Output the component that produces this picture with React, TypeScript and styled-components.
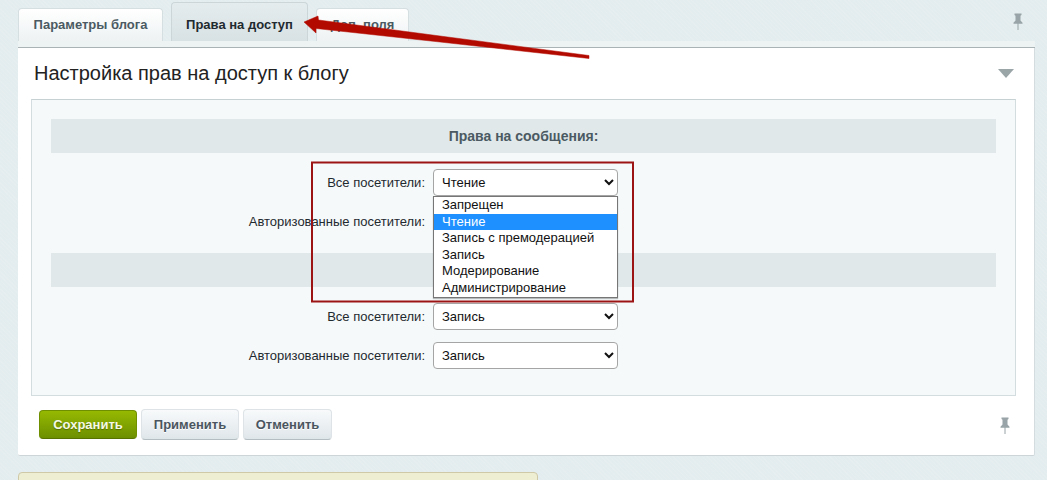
import React from "react";
import styled, { createGlobalStyle } from "styled-components";

const Global = createGlobalStyle`
  html, body { margin: 0; padding: 0; }
  body {
    background-color: #e3ecee;
    background-image: repeating-linear-gradient(45deg, rgba(255,255,255,.10) 0 1px, transparent 1px 3px);
    font-family: "Liberation Sans", Arial, sans-serif;
    overflow: hidden;
  }
`;

const Page = styled.div`
  position: relative;
  width: 1047px;
  height: 480px;
  overflow: hidden;
  padding: 0 12px 0 18px;
  box-sizing: border-box;
`;

const TabBar = styled.div`
  display: flex;
  align-items: flex-end;
  gap: 8px;
  height: 41px;
  position: relative;
`;

const Tab = styled.div<{ $active?: boolean; $width: number }>`
  box-sizing: border-box;
  width: ${(p) => p.$width}px;
  height: ${(p) => (p.$active ? 39 : 33)}px;
  padding: ${(p) => (p.$active ? "14px" : "8px")} 0 0;
  text-align: center;
  font-size: 13px;
  line-height: 15px;
  font-weight: bold;
  color: ${(p) => (p.$active ? "#1f2a30" : "#4b5a62")};
  border: 1px solid ${(p) => (p.$active ? "#ccd6d9" : "#d5dee0")};
  border-bottom: 0;
  border-radius: 4px 4px 0 0;
  background: ${(p) =>
    p.$active
      ? "linear-gradient(to bottom, #e4ecee, #d8e1e3)"
      : "linear-gradient(to bottom, #ffffff, #eef2f3)"};
`;

const TabPin = styled.svg`
  position: absolute;
  right: 12px;
  top: 13px;
`;

const Strip = styled.div`
  height: 6px;
  background: #edf2f3;
  border-bottom: 1px solid #a9b3b6;
`;

const Panel = styled.div`
  box-sizing: border-box;
  width: 1017px;
  height: 408px;
  background: #fff;
  border-bottom: 1px solid #cdd5d8;
  border-right: 1px solid #d5dcdf;
  display: flex;
  flex-direction: column;
  padding: 0 18px 0 13px;
  border-radius: 0 0 2px 2px;
`;

const TitleRow = styled.div`
  height: 51px;
  display: flex;
  align-items: center;
  justify-content: space-between;
  flex: none;
  padding: 0 3px 0 3px;
`;

const Title = styled.h1`
  margin: 0;
  font-size: 20px;
  font-weight: normal;
  color: #222;
`;

const Collapse = styled.svg`
  margin-right: -1px;
`;

const Inner = styled.div`
  box-sizing: border-box;
  width: 985px;
  height: 297px;
  flex: none;
  background: #f5f9f9;
  border: 1px solid #d3dde0;
  border-top-color: #c6d1d4;
  padding: 19px 19px 0;
`;

const SectionHead = styled.div`
  height: 34px;
  line-height: 34px;
  background: #e0e8ea;
  text-align: center;
  font-size: 14px;
  font-weight: bold;
  color: #4b5a62;
  margin-bottom: 16px;
`;

const Row = styled.div`
  display: grid;
  grid-template-columns: 374px 185px;
  column-gap: 8px;
  align-items: center;
  height: 27px;
  margin-bottom: 12px;
  position: relative;
  &:last-of-type { margin-bottom: 18px; }
`;

const Group = styled.div``;

const Label = styled.label`
  text-align: right;
  font-size: 13px;
  color: #1f2a30;
`;

const NativeSelect = styled.select`
  box-sizing: border-box;
  width: 185px;
  height: 27px;
  padding: 0 4px;
  background: #fff;
  border: 1px solid #a5a5a5;
  border-radius: 4px;
  font-family: "Liberation Sans", Arial, sans-serif;
  font-size: 13px;
  color: #111;
`;

const Dropdown = styled.ul`
  position: absolute;
  left: 382px;
  top: 27px;
  z-index: 3;
  box-sizing: border-box;
  width: 185px;
  height: 102px;
  margin: 0;
  padding: 0;
  list-style: none;
  background: #fff;
  border: 1px solid #767676;
  box-shadow: 0 1px 1px rgba(0,0,0,.25);
`;

const DropItem = styled.li<{ $selected?: boolean }>`
  height: 16.6px;
  line-height: 16px;
  padding-left: 8px;
  font-size: 13px;
  color: ${(p) => (p.$selected ? "#fff" : "#111")};
  background: ${(p) => (p.$selected ? "#1e90ff" : "transparent")};
`;

const Actions = styled.div`
  display: flex;
  align-items: center;
  gap: 4px;
  padding: 13px 0 0 8px;
  position: relative;
`;

const Button = styled.button<{ $primary?: boolean; $width: number }>`
  box-sizing: border-box;
  width: ${(p) => p.$width}px;
  height: ${(p) => (p.$primary ? 29 : 31)}px;
  padding: 0;
  font-family: "Liberation Sans", Arial, sans-serif;
  font-size: 13px;
  font-weight: bold;
  color: ${(p) => (p.$primary ? "#f4f8e4" : "#4a5560")};
  text-shadow: ${(p) => (p.$primary ? "0 1px 1px rgba(60,80,0,.6)" : "0 1px 0 #fff")};
  border: 1px solid ${(p) => (p.$primary ? "#6f8e00" : "#dde3e6")};
  border-bottom-color: ${(p) => (p.$primary ? "#587200" : "#b4bdc2")};
  border-radius: 4px;
  background: ${(p) =>
    p.$primary
      ? "linear-gradient(to bottom, #96b902, #6c8f00)"
      : "linear-gradient(to bottom, #f8fafb, #dfe6ea)"};
`;

const FooterPin = styled.svg`
  position: absolute;
  right: 6px;
  top: 21px;
`;

const Notice = styled.div`
  box-sizing: border-box;
  width: 520px;
  height: 30px;
  margin-top: 16px;
  background: #eeeed2;
  border: 1px solid #cfc9a8;
  border-radius: 4px 4px 0 0;
`;

const Annotations = styled.svg`
  position: absolute;
  left: 0;
  top: 0;
  z-index: 5;
  pointer-events: none;
`;

const Pin = ({ as: Wrap, color }: { as: any; color: string }) => (
  <Wrap width="10" height="17" viewBox="0 0 10 17">
    <path d="M1.5 0.5h7v1.6l-1 .7v4.7l2 2.3v1H0.5v-1l2-2.3V2.8l-1-.7z" fill={color} />
    <path d="M5 10v7" stroke={color} strokeWidth="1" />
  </Wrap>
);

const OPTIONS = [
  "Запрещен",
  "Чтение",
  "Запись с премодерацией",
  "Запись",
  "Модерирование",
  "Администрирование",
];

export default function App() {
  return (
    <Page>
      <Global />
      <TabBar>
        <Tab $width={145}>Параметры блога</Tab>
        <Tab $width={137} $active>Права на доступ</Tab>
        <Tab $width={93}>Доп. поля</Tab>
        <Pin as={TabPin} color="#98a4a8" />
      </TabBar>
      <Strip />
      <Panel>
        <TitleRow>
          <Title>Настройка прав на доступ к блогу</Title>
          <Collapse width="16" height="9" viewBox="0 0 16 9">
            <path d="M0 0h16L8 9z" fill="#9aa5a8" />
          </Collapse>
        </TitleRow>
        <Inner>
          <Group>
            <SectionHead>Права на сообщения:</SectionHead>
            <Row>
              <Label>Все посетители:</Label>
              <NativeSelect defaultValue="Чтение">
                {OPTIONS.map((o) => <option key={o}>{o}</option>)}
              </NativeSelect>
              <Dropdown>
                {OPTIONS.map((o) => (
                  <DropItem key={o} $selected={o === "Чтение"}>{o}</DropItem>
                ))}
              </Dropdown>
            </Row>
            <Row>
              <Label>Авторизованные посетители:</Label>
              <NativeSelect defaultValue="Чтение">
                {OPTIONS.map((o) => <option key={o}>{o}</option>)}
              </NativeSelect>
            </Row>
          </Group>
          <Group>
            <SectionHead />
            <Row>
              <Label>Все посетители:</Label>
              <NativeSelect defaultValue="Запись">
                {OPTIONS.map((o) => <option key={o}>{o}</option>)}
              </NativeSelect>
            </Row>
            <Row>
              <Label>Авторизованные посетители:</Label>
              <NativeSelect defaultValue="Запись">
                {OPTIONS.map((o) => <option key={o}>{o}</option>)}
              </NativeSelect>
            </Row>
          </Group>
        </Inner>
        <Actions>
          <Button $primary $width={98}>Сохранить</Button>
          <Button $width={98}>Применить</Button>
          <Button $width={89}>Отменить</Button>
          <Pin as={FooterPin} color="#98a4a8" />
        </Actions>
      </Panel>
      <Notice />
      <Annotations width="1047" height="480" viewBox="0 0 1047 480">
        <rect x="312" y="162.5" width="321" height="139" fill="none" stroke="#9c1414" strokeWidth="2" />
        <path
          d="M304 22 L318 16 L318.5 20 L440 36 L589 55.5 L589 58.5 L440 42 L316 28.5 L316 33 Z"
          fill="#b30a00"
          stroke="#b30a00"
          strokeWidth="0.5"
          strokeLinejoin="round"
        />
      </Annotations>
    </Page>
  );
}
